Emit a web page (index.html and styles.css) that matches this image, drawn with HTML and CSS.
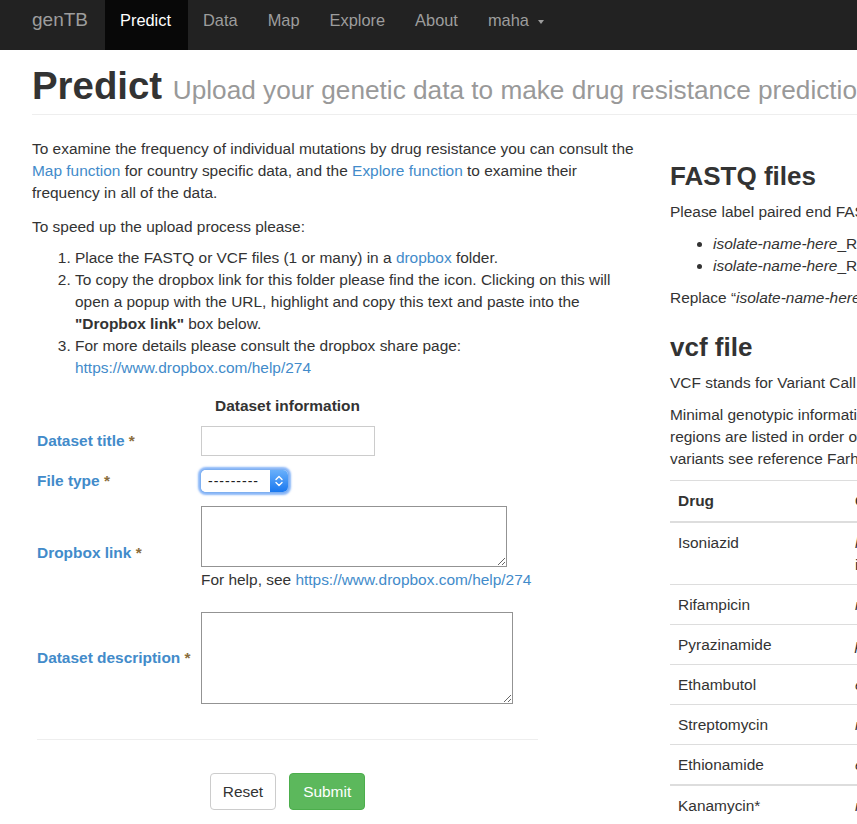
FILE: index.html
```html
<!DOCTYPE html>
<html lang="en">
<head>
<meta charset="utf-8">
<title>genTB - Predict</title>
<link rel="stylesheet" href="styles.css">
</head>
<body>
<nav class="navbar">
  <div class="nav-inner">
    <a class="brand" href="#">genTB</a>
    <ul class="nav">
      <li class="active"><a href="#">Predict</a></li>
      <li><a href="#">Data</a></li>
      <li><a href="#">Map</a></li>
      <li><a href="#">Explore</a></li>
      <li><a href="#">About</a></li>
      <li><a href="#">maha <span class="caret"></span></a></li>
    </ul>
  </div>
</nav>

<div class="page">
  <div class="page-header">
    <h1>Predict <small>Upload your genetic data to make drug resistance predictions</small></h1>
  </div>

  <div class="row">
    <div class="col-left">
      <p>To examine the frequency of individual mutations by drug resistance you can consult the <a href="#">Map function</a> for country specific data, and the <a href="#">Explore function</a> to examine their frequency in all of the data.</p>
      <p class="intro">To speed up the upload process please:</p>
      <ol class="steps">
        <li>Place the FASTQ or VCF files (1 or many) in a <a href="#">dropbox</a> folder.</li>
        <li>To copy the dropbox link for this folder please find the icon. Clicking on this will open a popup with the URL, highlight and copy this text and paste into the <b>"Dropbox link"</b> box below.</li>
        <li>For more details please consult the dropbox share page: <a href="#">https://www.dropbox.com/help/274</a></li>
      </ol>

      <form class="upload-form">
        <div class="form-head">Dataset information</div>

        <label class="f-label" for="title">Dataset title <span class="req">*</span></label>
        <div class="f-field"><input id="title" class="text-input" type="text"></div>

        <label class="f-label" for="ftype">File type <span class="req">*</span></label>
        <div class="f-field">
          <div class="select-wrap">
            <select id="ftype" class="select"><option>---------</option></select>
            <span class="stepper"><svg width="18" height="22" viewBox="0 0 18 22"><path d="M6 9.5 L9 6.5 L12 9.5" fill="none" stroke="#fff" stroke-width="1.4" stroke-linecap="round" stroke-linejoin="round"/><path d="M6 12.5 L9 15.5 L12 12.5" fill="none" stroke="#fff" stroke-width="1.4" stroke-linecap="round" stroke-linejoin="round"/></svg></span>
          </div>
        </div>

        <label class="f-label" for="dlink">Dropbox link <span class="req">*</span></label>
        <div class="f-field">
          <textarea id="dlink" class="area area-link"></textarea>
          <div class="help">For help, see <a href="#">https://www.dropbox.com/help/274</a></div>
        </div>

        <label class="f-label" for="desc">Dataset description <span class="req">*</span></label>
        <div class="f-field"><textarea id="desc" class="area area-desc"></textarea></div>

        <hr class="form-rule">

        <div class="actions">
          <button type="reset" class="btn btn-default">Reset</button>
          <button type="submit" class="btn btn-success">Submit</button>
        </div>
      </form>
    </div>

    <div class="col-right">
      <h2>FASTQ files</h2>
      <p>Please label paired end FASTQ files as follows:</p>
      <ul class="bullets">
        <li><i>isolate-name-here</i>_R1.fastq.gz</li>
        <li><i>isolate-name-here</i>_R2.fastq.gz</li>
      </ul>
      <p>Replace “<i>isolate-name-here</i>” with your own isolate name.</p>

      <h2>vcf file</h2>
      <p>VCF stands for Variant Call Format.</p>
      <p>Minimal genotypic information needed to make predictions is listed below.<br>regions are listed in order of their importance for prediction. For the<br>variants see reference Farhat et al.</p>

      <table class="drug-table">
        <thead>
          <tr><th class="c1">Drug</th><th>Genes</th></tr>
        </thead>
        <tbody>
          <tr><td class="c1">Isoniazid</td><td><i>katG, inhA, fabG1, ahpC, kasA,</i><br>iniB</td></tr>
          <tr><td class="c1">Rifampicin</td><td><i>rpoB</i></td></tr>
          <tr><td class="c1">Pyrazinamide</td><td><i>pncA</i></td></tr>
          <tr><td class="c1">Ethambutol</td><td><i>embB</i></td></tr>
          <tr><td class="c1">Streptomycin</td><td><i>rpsL, rrs, gid</i></td></tr>
          <tr><td class="c1">Ethionamide</td><td><i>ethA, inhA</i></td></tr>
        </tbody>
        <tbody>
          <tr><td class="c1">Kanamycin*</td><td><i>rrs, eis</i></td></tr>
        </tbody>
      </table>
    </div>
  </div>
</div>
</body>
</html>
```

FILE: styles.css
```css
html, body {
  overflow: hidden;
}

body {
  margin: 0;
  font-family: "Liberation Sans", Arial, sans-serif;
  font-size: 15.45px;
  line-height: 22px;
  color: #333;
  background: #fff;
}

a {
  color: #428bca;
  text-decoration: none;
}

/* ---------- navbar ---------- */
.navbar {
  background: #222;
  height: 50px;
  width: 1400px;
}

.nav-inner {
  display: flex;
  height: 50px;
  padding-left: 17px;
}

.brand {
  padding: 9px 15px 0;
  margin-right: 2px;
  font-size: 19px;
  line-height: 22px;
  color: #9d9d9d;
}

.nav {
  display: flex;
  list-style: none;
  margin: 0;
  padding: 0;
}

.nav a {
  display: block;
  height: 50px;
  box-sizing: border-box;
  padding: 10px 15px 0;
  font-size: 16.4px;
  line-height: 20px;
  color: #9d9d9d;
}

.nav .active a {
  background: #080808;
  color: #fff;
  padding-right: 17px;
}

.caret {
  display: inline-block;
  width: 0;
  height: 0;
  margin-left: 4px;
  vertical-align: middle;
  border-top: 4px solid #9d9d9d;
  border-left: 3px solid transparent;
  border-right: 3px solid transparent;
}

/* ---------- page ---------- */
.page {
  width: 1300px;
  padding-left: 32px;
}

.page-header {
  margin-top: 14px;
  padding-bottom: 6px;
  border-bottom: 1px solid #eee;
  margin-bottom: 23px;
}

.page-header h1 {
  margin: 0;
  font-size: 38.4px;
  line-height: 44px;
  font-weight: bold;
  color: #333;
  white-space: nowrap;
}

.page-header small {
  font-size: 26.2px;
  line-height: 1;
  font-weight: normal;
  color: #999;
}

.row {
  display: flex;
  align-items: flex-start;
}

.col-left {
  width: 608px;
  flex: none;
}

.col-right {
  width: 600px;
  margin-left: 30px;
  flex: none;
}

p {
  margin: 0 0 12px;
}

.intro {
  margin-bottom: 9px;
}

.steps {
  margin: 0 0 10px;
  padding-left: 43px;
}

/* ---------- form ---------- */
.upload-form {
  margin-left: 5px;
  width: 501px;
  display: grid;
  grid-template-columns: 164px 1fr;
  align-items: center;
  row-gap: 13px;
}

.form-head {
  grid-column: 1 / -1;
  text-align: center;
  font-weight: bold;
  margin: 6px 0 -4px;
}

.f-label {
  font-weight: bold;
  color: #428bca;
}

.req {
  color: #8a6d3b;
}

.text-input {
  display: block;
  width: 174px;
  height: 30px;
  box-sizing: border-box;
  border: 1px solid #ccc;
  margin: 0;
  padding: 4px 6px;
  font: inherit;
}

.select-wrap {
  display: flex;
  width: 87px;
  height: 22px;
  margin: 1px 0;
  border-radius: 5px;
  overflow: hidden;
  background: #fff;
  box-shadow: 0 0 0 1px #7fb0f0, 0 0 2px 3px rgba(98, 158, 245, 0.75);
}

.select {
  -webkit-appearance: none;
  appearance: none;
  flex: 1;
  min-width: 0;
  border: 0;
  margin: 0;
  padding: 0 0 0 7px;
  background: #fff;
  font-family: "Liberation Sans", Arial, sans-serif;
  font-size: 14px;
  letter-spacing: 1px;
  color: #222;
  outline: none;
}

.stepper {
  width: 18px;
  flex: none;
  background: linear-gradient(#69b0fb, #1a78ef);
}

.stepper svg {
  display: block;
}

.area {
  display: block;
  box-sizing: border-box;
  margin: 0;
  border: 1px solid #939393;
  font: inherit;
  padding: 2px;
}

.area-link {
  width: 306px;
  height: 61px;
}

.area-desc {
  width: 312px;
  height: 92px;
}

.help {
  margin-top: 2px;
  margin-bottom: 8px;
}

.form-rule {
  grid-column: 1 / -1;
  width: 100%;
  margin: 22px 0 20px;
  border: 0;
  border-top: 1px solid #eee;
}

.actions {
  grid-column: 1 / -1;
  display: flex;
  justify-content: center;
  gap: 13px;
}

.btn {
  font-family: "Liberation Sans", Arial, sans-serif;
  font-size: 15.45px;
  line-height: 21px;
  padding: 7px 12px;
  border-radius: 4px;
  border: 1px solid #ccc;
  margin: 0;
}

.btn-default {
  background: #fff;
  color: #333;
}

.btn-success {
  background: #5cb85c;
  border-color: #4cae4c;
  color: #fff;
  padding: 7px 13px;
}

/* ---------- right column ---------- */
.col-right h2 {
  font-size: 26px;
  line-height: 29px;
  font-weight: bold;
  margin: 24px 0 10px;
  color: #333;
}

.col-right p {
  margin: 0 0 10px;
  white-space: nowrap;
}

.bullets {
  margin: 0 0 10px;
  padding-left: 43px;
  white-space: nowrap;
}

.drug-table {
  border-collapse: collapse;
  width: 560px;
  border-top: 1px solid #ddd;
}

.drug-table th,
.drug-table td {
  text-align: left;
  vertical-align: top;
  white-space: nowrap;
}

.drug-table th {
  padding: 9px 8px;
  border-bottom: 2px solid #ddd;
}

.drug-table td {
  padding: 9px 8px 8px;
  border-top: 1px solid #ddd;
}

.drug-table tbody + tbody {
  border-top: 2px solid #ddd;
}

.drug-table .c1 {
  width: 161px;
}
```
